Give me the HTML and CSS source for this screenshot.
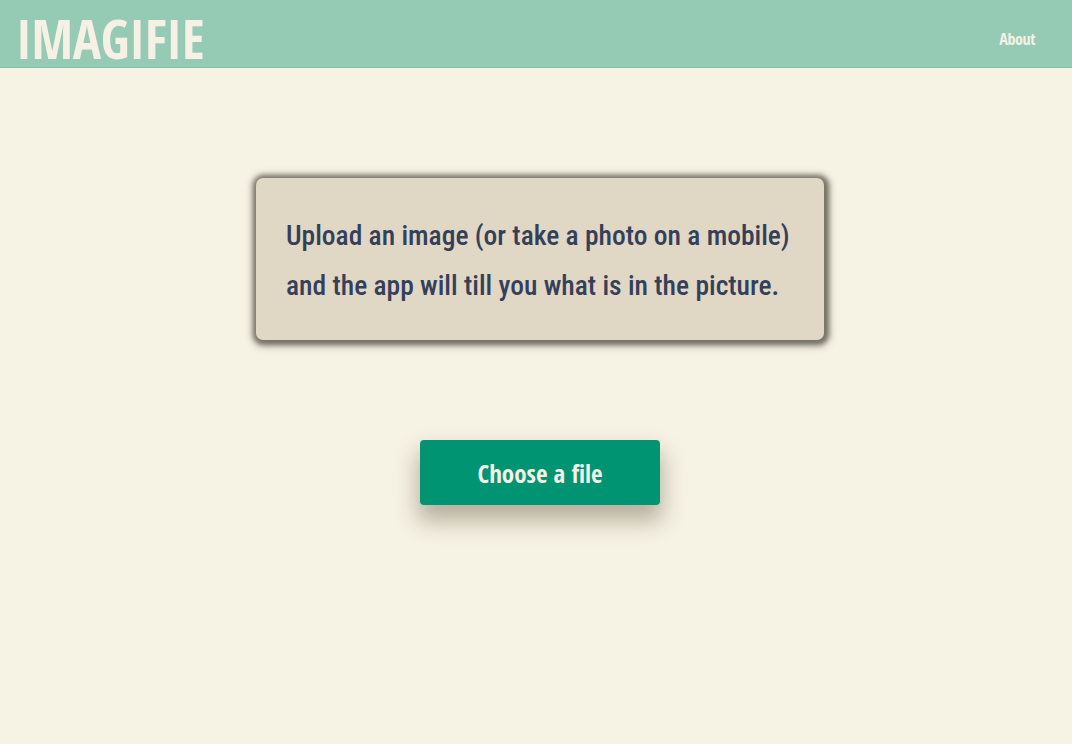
FILE: index.html
```html
<!DOCTYPE html>
<html lang="en">
<head>
<meta charset="utf-8">
<title>Imagifie</title>
<link rel="stylesheet" href="styles.css">
</head>
<body>
<header class="topbar">
  <div class="logo">IMAGIFIE</div>
  <nav class="nav"><a class="nav-link" href="#">About</a></nav>
</header>
<main class="main">
  <section class="intro">
    <p class="intro-text">Upload an image (or take a photo on a mobile)<br>and the app will till you what is in the picture.</p>
  </section>
  <label class="upload-btn">Choose a file</label>
</main>
</body>
</html>
```
FILE: styles.css
```css
* { box-sizing: border-box; }
html, body { margin: 0; padding: 0; }
body {
  background: #f6f2e4;
  font-family: "Open Sans Condensed", "Roboto Condensed", sans-serif;
  min-height: 744px;
}
.topbar {
  height: 68px;
  background: #95cbb4;
  border-bottom: 1px solid #86c0a8;
  display: flex;
  align-items: center;
  justify-content: space-between;
  padding: 0 37px 0 16px;
}
.logo {
  color: #f6f1e4;
  font-family: "Open Sans Condensed", sans-serif;
  font-weight: 700;
  font-size: 53px;
  line-height: 1;
  padding-top: 10px;
  letter-spacing: -0.3px;
}
.nav {
  padding-top: 10px;
}
.nav-link {
  color: #f6f1e4;
  text-decoration: none;
  font-family: "Open Sans Condensed", sans-serif;
  font-weight: 700;
  font-size: 16px;
  letter-spacing: -0.4px;
}
.main {
  display: flex;
  flex-direction: column;
  align-items: center;
  padding: 110px 0 0 8px;
}
.intro {
  width: 568px;
  height: 162px;
  background: #e0d7c5;
  border-radius: 7px;
  box-shadow: 1px 1px 5px 4px rgba(110,104,94,0.9), 1px 2px 10px 4px rgba(60,55,45,0.25);
  padding: 33px 0 0 30px;
}
.intro-text {
  margin: 0;
  color: #34405a;
  font-family: "Roboto Condensed", sans-serif;
  font-weight: 500;
  font-size: 27.5px;
  line-height: 50px;
}
.upload-btn {
  margin-top: 100px;
  width: 240px;
  height: 65px;
  background: #009473;
  border-radius: 4px;
  color: #f6f1e4;
  font-family: "Open Sans Condensed", sans-serif;
  font-weight: 700;
  font-size: 25px;
  display: flex;
  align-items: center;
  justify-content: center;
  box-shadow: 0 14px 22px 2px rgba(90,78,55,0.4);
  cursor: pointer;
}
```
